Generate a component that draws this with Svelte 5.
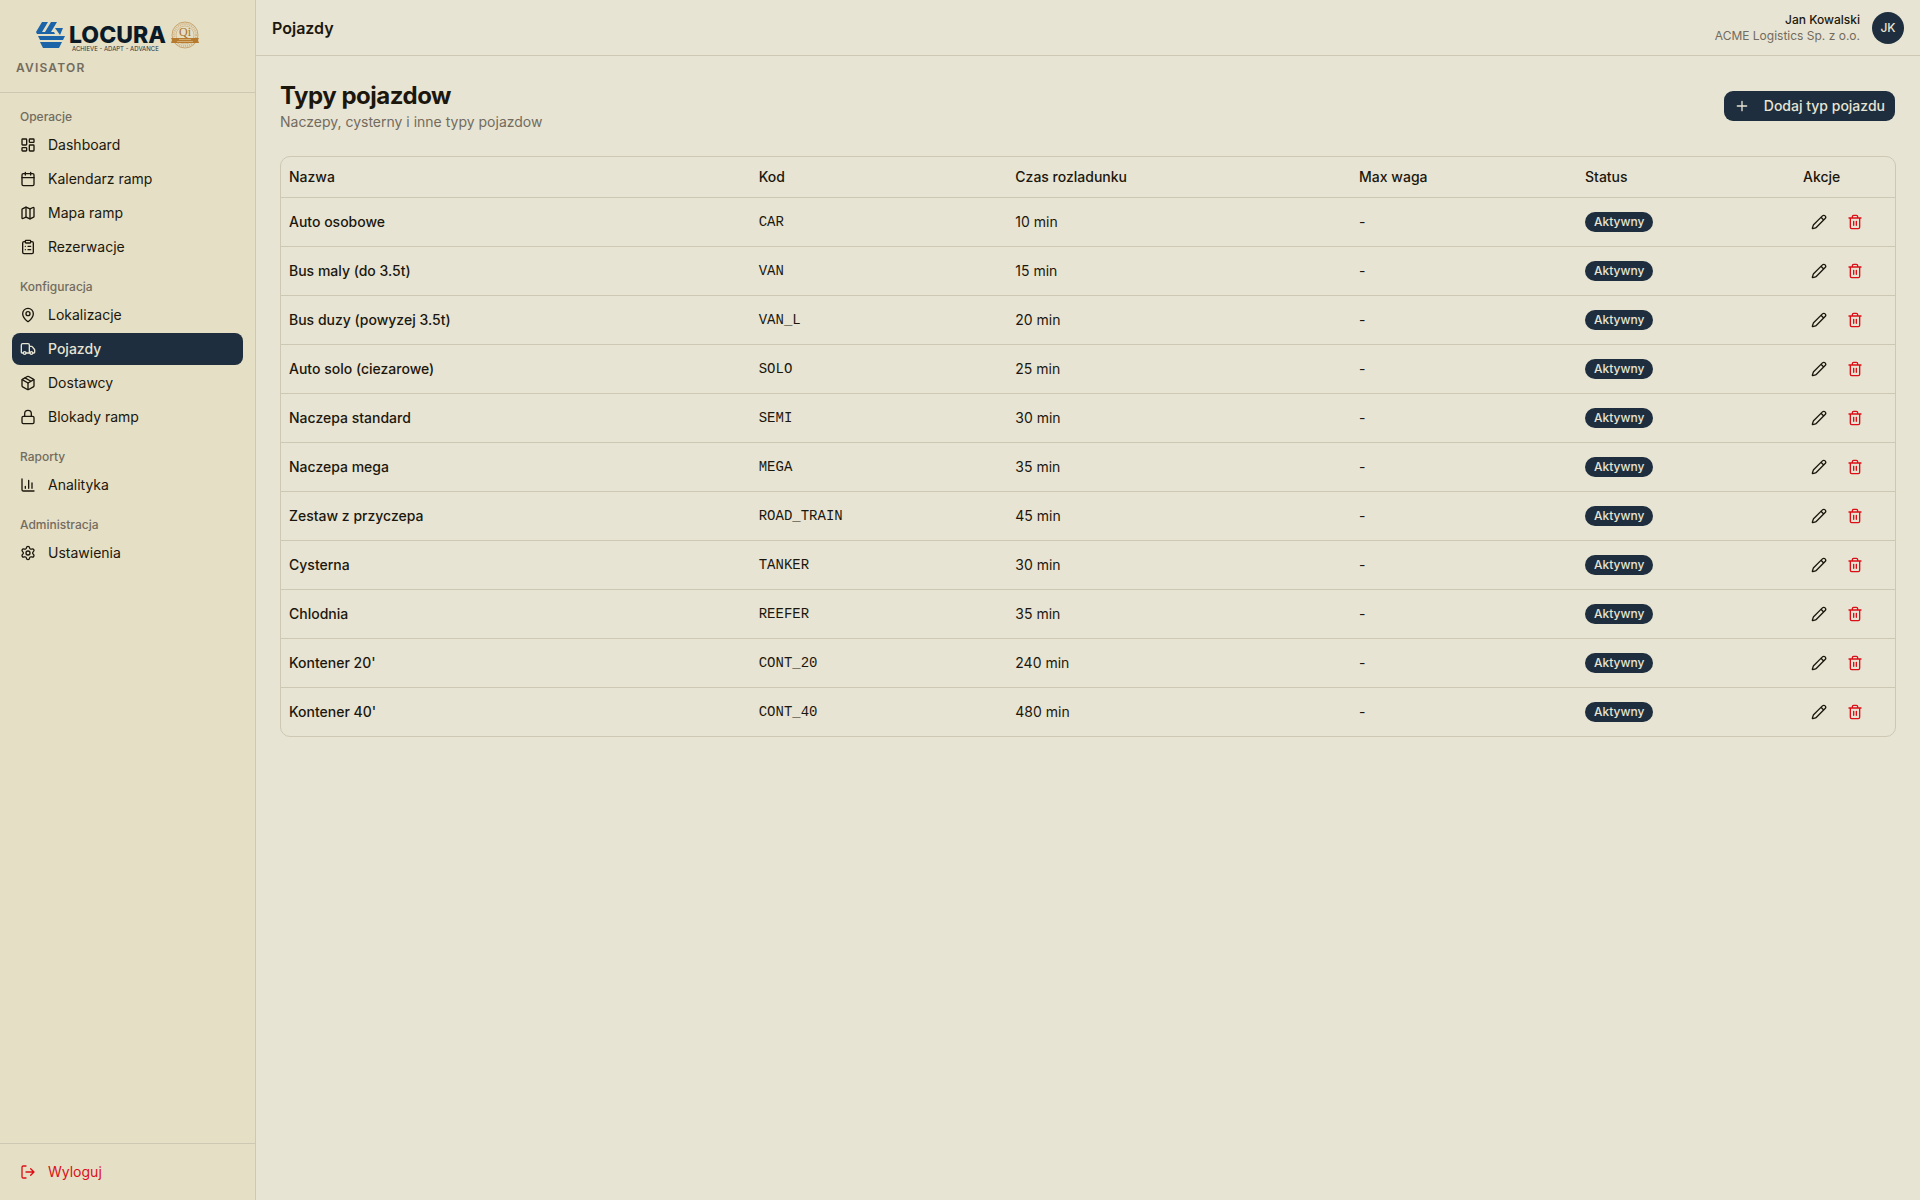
<script>
  const icons = {
    dashboard:
      '<rect width="7" height="9" x="3" y="3" rx="1"/><rect width="7" height="5" x="14" y="3" rx="1"/><rect width="7" height="9" x="14" y="12" rx="1"/><rect width="7" height="5" x="3" y="16" rx="1"/>',
    calendar:
      '<path d="M8 2v4M16 2v4"/><rect width="18" height="18" x="3" y="4" rx="2"/><path d="M3 10h18"/>',
    map: '<path d="M14.106 5.553a2 2 0 0 0 1.788 0l3.659-1.83A1 1 0 0 1 21 4.619v12.764a1 1 0 0 1-.553.894l-4.553 2.277a2 2 0 0 1-1.788 0l-4.212-2.106a2 2 0 0 0-1.788 0l-3.659 1.83A1 1 0 0 1 3 19.381V6.618a1 1 0 0 1 .553-.894l4.553-2.277a2 2 0 0 1 1.788 0z"/><path d="M15 5.764v15M9 3.236v15"/>',
    clipboard:
      '<rect width="8" height="4" x="8" y="2" rx="1"/><path d="M16 4h2a2 2 0 0 1 2 2v14a2 2 0 0 1-2 2H6a2 2 0 0 1-2-2V6a2 2 0 0 1 2-2h2M12 11h4M12 16h4M8 11h.01M8 16h.01"/>',
    pin: '<path d="M20 10c0 4.993-5.539 10.193-7.399 11.799a1 1 0 0 1-1.202 0C9.539 20.193 4 14.993 4 10a8 8 0 0 1 16 0"/><circle cx="12" cy="10" r="3"/>',
    truck:
      '<path d="M14 18V6a2 2 0 0 0-2-2H4a2 2 0 0 0-2 2v11a1 1 0 0 0 1 1h2M15 18H9M19 18h2a1 1 0 0 0 1-1v-3.65a1 1 0 0 0-.22-.624l-3.48-4.35A1 1 0 0 0 17.52 8H14"/><circle cx="17" cy="18" r="2"/><circle cx="7" cy="18" r="2"/>',
    box: '<path d="M11 21.73a2 2 0 0 0 2 0l7-4A2 2 0 0 0 21 16V8a2 2 0 0 0-1-1.73l-7-4a2 2 0 0 0-2 0l-7 4A2 2 0 0 0 3 8v8a2 2 0 0 0 1 1.73zM12 22V12"/><path d="M3.29 7 12 12l8.71-5M7.5 4.27l9 5.15"/>',
    lock: '<rect width="18" height="11" x="3" y="11" rx="2"/><path d="M7 11V7a5 5 0 0 1 10 0v4"/>',
    chart: '<path d="M3 3v16a2 2 0 0 0 2 2h16M18 17V9M13 17V5M8 17v-3"/>',
    settings:
      '<path d="M9.671 4.136a2.34 2.34 0 0 1 4.659 0 2.34 2.34 0 0 0 3.319 1.915 2.34 2.34 0 0 1 2.33 4.033 2.34 2.34 0 0 0 0 3.831 2.34 2.34 0 0 1-2.33 4.033 2.34 2.34 0 0 0-3.319 1.915 2.34 2.34 0 0 1-4.659 0 2.34 2.34 0 0 0-3.32-1.915 2.34 2.34 0 0 1-2.33-4.033 2.34 2.34 0 0 0 0-3.831A2.34 2.34 0 0 1 6.35 6.051a2.34 2.34 0 0 0 3.319-1.915"/><circle cx="12" cy="12" r="3"/>',
    logout: '<path d="m16 17 5-5-5-5M21 12H9M9 21H5a2 2 0 0 1-2-2V5a2 2 0 0 1 2-2h4"/>',
    plus: '<path d="M5 12h14M12 5v14"/>',
    pencil:
      '<path d="M21.174 6.812a1 1 0 0 0-3.986-3.987L3.842 16.174a2 2 0 0 0-.5.83l-1.321 4.352a.5.5 0 0 0 .623.622l4.353-1.32a2 2 0 0 0 .83-.497zM15 5l4 4"/>',
    trash:
      '<path d="M10 11v6M14 11v6M19 6v14a2 2 0 0 1-2 2H7a2 2 0 0 1-2-2V6M3 6h18M8 6V4a2 2 0 0 1 2-2h4a2 2 0 0 1 2 2v2"/>',
  };

  const groups = [
    {
      title: "Operacje",
      items: [
        { label: "Dashboard", icon: "dashboard" },
        { label: "Kalendarz ramp", icon: "calendar" },
        { label: "Mapa ramp", icon: "map" },
        { label: "Rezerwacje", icon: "clipboard" },
      ],
    },
    {
      title: "Konfiguracja",
      items: [
        { label: "Lokalizacje", icon: "pin" },
        { label: "Pojazdy", icon: "truck" },
        { label: "Dostawcy", icon: "box" },
        { label: "Blokady ramp", icon: "lock" },
      ],
    },
    { title: "Raporty", items: [{ label: "Analityka", icon: "chart" }] },
    { title: "Administracja", items: [{ label: "Ustawienia", icon: "settings" }] },
  ];

  let active = $state("Pojazdy");

  let types = $state([
    { name: "Auto osobowe", code: "CAR", time: 10 },
    { name: "Bus maly (do 3.5t)", code: "VAN", time: 15 },
    { name: "Bus duzy (powyzej 3.5t)", code: "VAN_L", time: 20 },
    { name: "Auto solo (ciezarowe)", code: "SOLO", time: 25 },
    { name: "Naczepa standard", code: "SEMI", time: 30 },
    { name: "Naczepa mega", code: "MEGA", time: 35 },
    { name: "Zestaw z przyczepa", code: "ROAD_TRAIN", time: 45 },
    { name: "Cysterna", code: "TANKER", time: 30 },
    { name: "Chlodnia", code: "REEFER", time: 35 },
    { name: "Kontener 20'", code: "CONT_20", time: 240 },
    { name: "Kontener 40'", code: "CONT_40", time: 480 },
  ]);

  function remove(code) {
    types = types.filter((t) => t.code !== code);
  }
</script>

{#snippet icon(name)}
  <svg
    class="icon"
    viewBox="0 0 24 24"
    fill="none"
    stroke="currentColor"
    stroke-width="2"
    stroke-linecap="round"
    stroke-linejoin="round"
    aria-hidden="true">
    {@html icons[name]}
  </svg>
{/snippet}

<div class="layout">
  <aside class="sidebar">
    <div class="brand">
      <svg class="logo" viewBox="0 0 184 36" role="img" aria-label="Locura">
        <g fill="#1b64a8">
          <path d="M6 4h6L6 14h3l6-10h6l-6 10h3l1 2H1l-1-2z" />
          <path d="M19 10h8l-3 7z" />
          <path d="M2 18h27l-2 4H4z" />
          <path d="M4 24h22l-3 6H7z" />
        </g>
        <text class="logo-name" x="33" y="25">LOCURA</text>
        <text class="logo-tag" x="36" y="33">ACHIEVE - ADAPT - ADVANCE</text>
        <g fill="none" stroke="#c19355">
          <circle cx="149" cy="17" r="13" stroke-width="0.8" />
          <circle cx="149" cy="17" r="11" stroke-width="2" stroke-dasharray="1 1" opacity="0.6" />
          <circle cx="149" cy="17" r="9" stroke-width="0.5" />
        </g>
        <path d="M135 20h28l-1 2 1 3h-28l1-3z" fill="#b77b30" />
        <path d="M143 21.5h12M141 23.5h16" stroke="#e4cf9d" stroke-width="0.6" />
        <text class="logo-seal" x="149" y="18">Qi</text>
      </svg>
      <span class="brand-sub">AVISATOR</span>
    </div>

    <nav>
      {#each groups as group}
        <div class="group">
          <div class="group-title">{group.title}</div>
          <ul>
            {#each group.items as item}
              <li>
                <a
                  href="#{item.icon}"
                  class="item"
                  class:active={active === item.label}
                  onclick={() => (active = item.label)}>
                  {@render icon(item.icon)}
                  <span>{item.label}</span>
                </a>
              </li>
            {/each}
          </ul>
        </div>
      {/each}
    </nav>

    <div class="footer">
      <button class="item logout" type="button">
        {@render icon("logout")}
        <span>Wyloguj</span>
      </button>
    </div>
  </aside>

  <div class="page">
    <header class="topbar">
      <span class="topbar-title">Pojazdy</span>
      <div class="user">
        <div class="user-text">
          <span class="user-name">Jan Kowalski</span>
          <span class="user-company">ACME Logistics Sp. z o.o.</span>
        </div>
        <div class="avatar">JK</div>
      </div>
    </header>

    <main>
      <div class="heading">
        <div>
          <h1>Typy pojazdow</h1>
          <p>Naczepy, cysterny i inne typy pojazdow</p>
        </div>
        <button class="add" type="button">
          {@render icon("plus")}
          <span>Dodaj typ pojazdu</span>
        </button>
      </div>

      <div class="table-wrap">
        <table>
          <thead>
            <tr>
              <th class="col-name">Nazwa</th>
              <th class="col-code">Kod</th>
              <th class="col-time">Czas rozladunku</th>
              <th class="col-weight">Max waga</th>
              <th>Status</th>
              <th class="col-actions">Akcje</th>
            </tr>
          </thead>
          <tbody>
            {#each types as type (type.code)}
              <tr>
                <td class="name">{type.name}</td>
                <td class="code">{type.code}</td>
                <td>{type.time} min</td>
                <td>-</td>
                <td><span class="badge">Aktywny</span></td>
                <td>
                  <div class="actions">
                    <button type="button" aria-label="Edytuj {type.name}">
                      {@render icon("pencil")}
                    </button>
                    <button
                      type="button"
                      class="danger"
                      aria-label="Usun {type.name}"
                      onclick={() => remove(type.code)}>
                      {@render icon("trash")}
                    </button>
                  </div>
                </td>
              </tr>
            {/each}
          </tbody>
        </table>
      </div>
    </main>
  </div>
</div>

<style>
  :global(body) {
    background: #e7e4d3;
  }

  .layout {
    --bg: #e7e4d3;
    --side: #e4dfc5;
    --line: #cdc8b4;
    --ink: #1c170d;
    --muted: #736b5e;
    --navy: #1e2e3e;
    --red: #dc0f18;
    display: flex;
    min-height: 100vh;
    background: var(--bg);
    color: var(--ink);
    font-family: Inter, sans-serif;
    font-size: 14px;
    line-height: 20px;
  }

  .layout * {
    box-sizing: border-box;
  }

  button {
    font: inherit;
    border: 0;
    background: none;
    color: inherit;
    cursor: pointer;
  }

  .icon {
    width: 16px;
    height: 16px;
    flex-shrink: 0;
  }

  .sidebar {
    display: flex;
    flex-direction: column;
    width: 256px;
    flex-shrink: 0;
    background: var(--side);
    border-right: 1px solid var(--line);
  }

  .brand {
    display: flex;
    flex-direction: column;
    padding: 16px;
    border-bottom: 1px solid var(--line);
  }

  .logo {
    align-self: center;
    width: 184px;
    height: 36px;
    margin: 2px 0 6px;
  }

  .logo-name {
    font-size: 23px;
    font-weight: 800;
    fill: #0b1a26;
  }

  .logo-tag {
    font-size: 6px;
    fill: #2b333a;
  }

  .logo-seal {
    font-family: "Liberation Serif", serif;
    font-size: 12px;
    fill: #a9712a;
    text-anchor: middle;
  }

  .brand-sub {
    font-size: 12px;
    line-height: 16px;
    font-weight: 600;
    letter-spacing: 0.1em;
    color: var(--muted);
  }

  nav {
    display: flex;
    flex: 1;
    flex-direction: column;
    gap: 12px;
    padding: 12px;
  }

  .group-title {
    padding: 4px 8px;
    font-size: 12px;
    line-height: 16px;
    font-weight: 500;
    color: var(--muted);
  }

  ul {
    display: flex;
    flex-direction: column;
    gap: 2px;
    margin: 0;
    padding: 0;
    list-style: none;
  }

  .item {
    display: flex;
    align-items: center;
    gap: 12px;
    width: 100%;
    height: 32px;
    padding: 0 8px;
    border-radius: 8px;
    color: inherit;
    text-decoration: none;
  }

  .item.active {
    background: var(--navy);
    color: var(--bg);
    font-weight: 500;
  }

  .item.logout {
    color: var(--red);
  }

  .footer {
    padding: 12px;
    border-top: 1px solid var(--line);
  }

  .page {
    flex: 1;
    min-width: 0;
  }

  .topbar {
    display: flex;
    align-items: center;
    justify-content: space-between;
    height: 56px;
    padding: 0 16px;
    border-bottom: 1px solid var(--line);
  }

  .topbar-title {
    font-size: 16px;
    line-height: 24px;
    font-weight: 600;
  }

  .user {
    display: flex;
    align-items: center;
    gap: 12px;
  }

  .user-text {
    display: flex;
    flex-direction: column;
    align-items: flex-end;
    font-size: 12px;
    line-height: 16px;
  }

  .user-name {
    font-weight: 500;
  }

  .user-company {
    color: var(--muted);
  }

  .avatar {
    display: flex;
    align-items: center;
    justify-content: center;
    width: 32px;
    height: 32px;
    border-radius: 50%;
    background: var(--navy);
    color: var(--bg);
    font-size: 12px;
    font-weight: 500;
  }

  main {
    display: flex;
    flex-direction: column;
    gap: 24px;
    padding: 24px;
  }

  .heading {
    display: flex;
    align-items: center;
    justify-content: space-between;
  }

  h1 {
    margin: 0;
    font-size: 24px;
    line-height: 32px;
    font-weight: 700;
    letter-spacing: -0.02em;
  }

  p {
    margin: 0;
    color: var(--muted);
  }

  .add {
    display: flex;
    align-items: center;
    gap: 14px;
    height: 32px;
    padding: 0 10px;
    border: 1px solid transparent;
    border-radius: 10px;
    background: var(--navy);
    background-clip: padding-box;
    color: var(--bg);
    font-weight: 500;
  }

  .table-wrap {
    overflow: hidden;
    border: 1px solid var(--line);
    border-radius: 10px;
  }

  table {
    width: 100%;
    border-collapse: collapse;
  }

  th {
    height: 40px;
    padding: 0 8px;
    text-align: left;
    font-weight: 500;
    white-space: nowrap;
  }

  .col-name {
    width: 29.1%;
  }

  .col-code {
    width: 15.9%;
  }

  .col-time {
    width: 21.3%;
  }

  .col-weight {
    width: 14%;
  }

  .col-actions {
    width: 100px;
  }

  td {
    padding: 8px;
    white-space: nowrap;
  }

  tr {
    border-bottom: 1px solid var(--line);
  }

  tbody tr:last-child {
    border-bottom: 0;
  }

  .name {
    font-weight: 500;
  }

  .code {
    font-family: "Liberation Mono", monospace;
  }

  .badge {
    display: inline-flex;
    align-items: center;
    height: 20px;
    padding: 0 9px;
    border-radius: 10px;
    background: var(--navy);
    color: var(--bg);
    font-size: 12px;
    line-height: 16px;
    font-weight: 500;
    vertical-align: middle;
  }

  .actions {
    display: flex;
    gap: 4px;
  }

  .actions button {
    display: flex;
    align-items: center;
    justify-content: center;
    width: 32px;
    height: 32px;
    padding: 0;
    border-radius: 8px;
  }

  .actions .danger {
    color: var(--red);
  }
</style>
